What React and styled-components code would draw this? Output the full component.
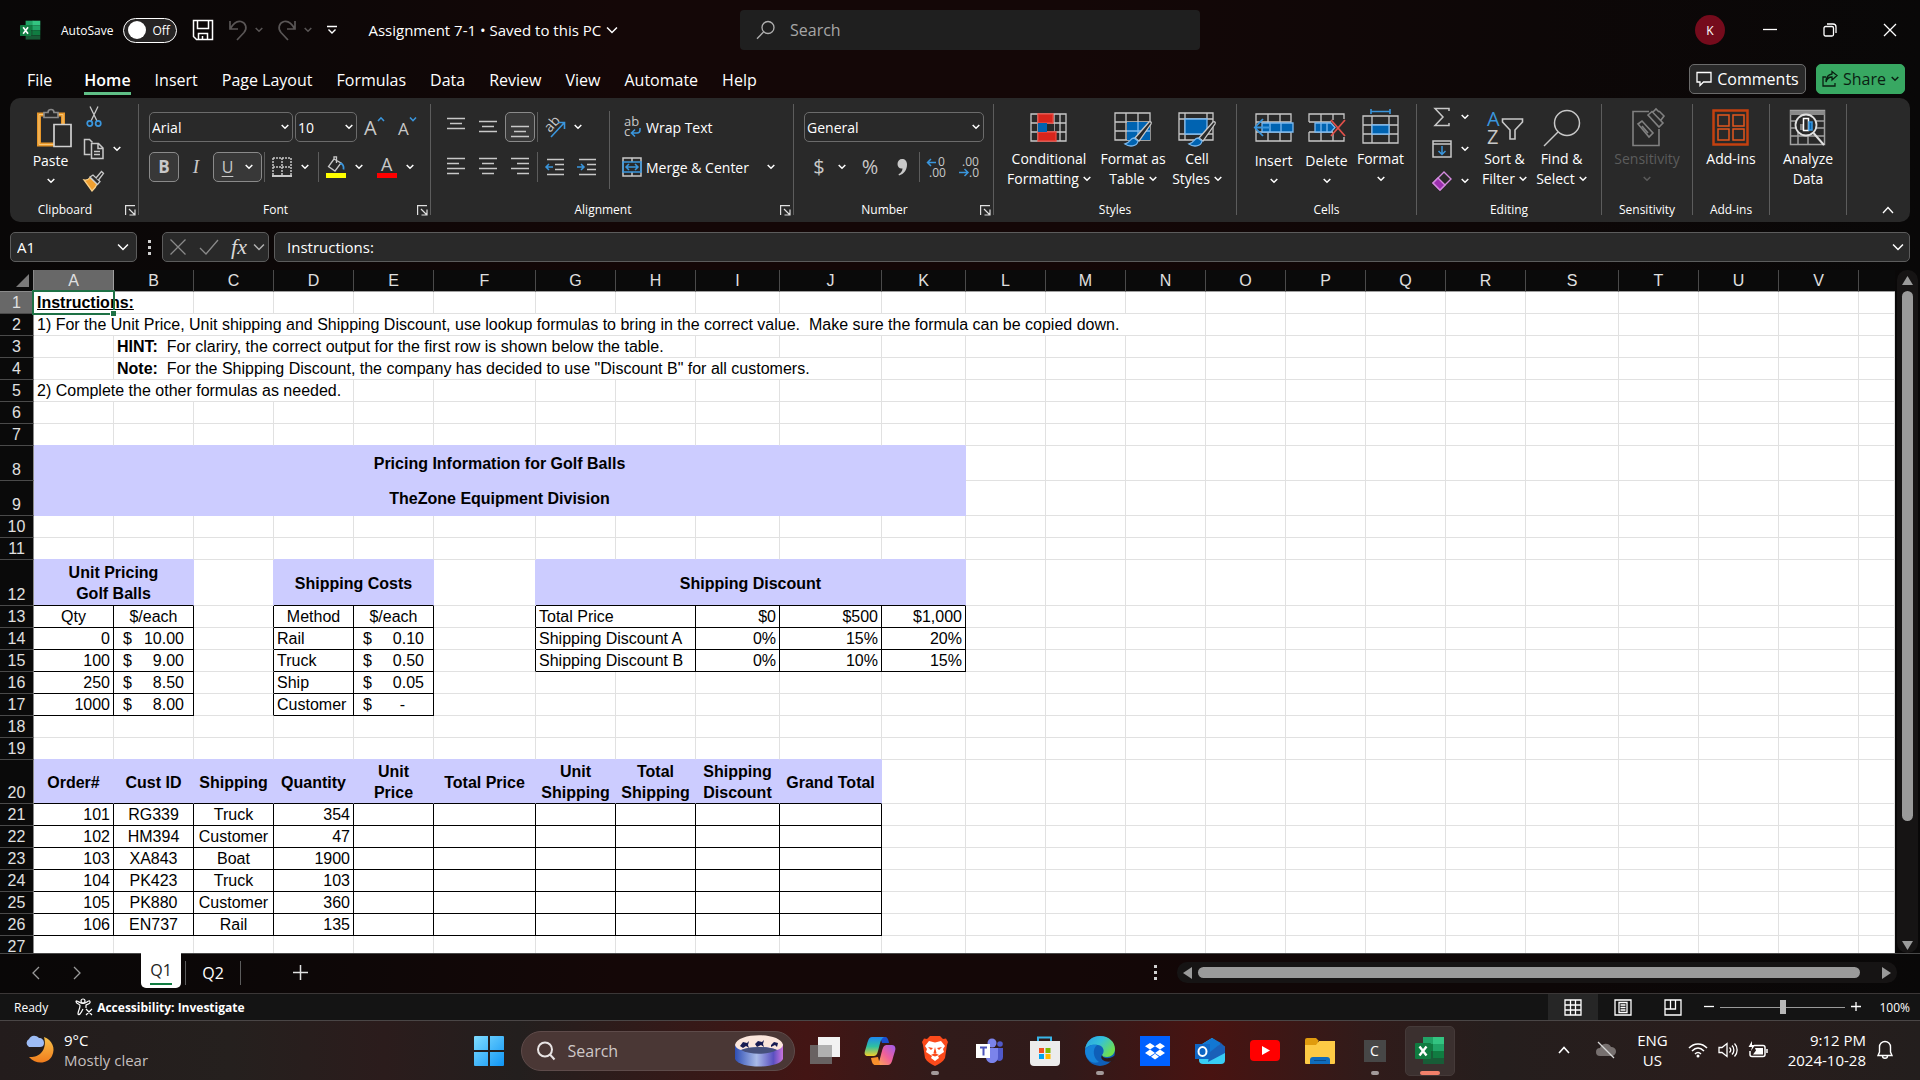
import React from 'react';
import styled, { createGlobalStyle, css } from 'styled-components';

const UI_FONT = '"Open Sans", "Noto Sans", sans-serif';
const CELL_FONT = '"Liberation Sans", Arial, sans-serif';

const LINE = '#c8c8c8';
const BLUE = '#3a96dd';
const FILL_BLUE = '#0063b1';

/* ---------- sheet data ---------- */

const COLUMNS = [
  ['A', 80], ['B', 80], ['C', 80], ['D', 80], ['E', 80], ['F', 102],
  ['G', 80], ['H', 80], ['I', 84], ['J', 102], ['K', 84], ['L', 80],
  ['M', 80], ['N', 80], ['O', 80], ['P', 80], ['Q', 80], ['R', 80],
  ['S', 93], ['T', 80], ['U', 80], ['V', 80], ['', null],
];

const ROW_HEIGHTS = { 8: 35, 9: 35, 12: 46, 20: 44 };
const ROW_COUNT = 27;

// [first row, last row, first column, last column]
const FILLED = [
  [8, 9, 0, 10],
  [12, 12, 0, 1],
  [12, 12, 3, 4],
  [12, 12, 6, 10],
  [20, 20, 0, 9],
];
const BOXED = [
  [13, 17, 0, 1],
  [13, 17, 3, 4],
  [13, 15, 6, 10],
  [21, 26, 0, 9],
];

const money = (value) => ({ money: value });
const right = (text) => ({ text, align: 'right' });
const center = (text) => ({ text, align: 'center' });
const head = (text, span = 1) => ({ text, align: 'center', bold: true, heading: true, span });

const CELLS = {
  '1-0': { text: 'Instructions:', bold: true, underline: true, span: 2, selected: true },
  '2-0': {
    text: '1) For the Unit Price, Unit shipping and Shipping Discount, use lookup formulas to bring in the correct value.  Make sure the formula can be copied down.',
    span: 14,
  },
  '3-1': { lead: 'HINT:', text: '  For clariry, the correct output for the first row is shown below the table.', span: 7 },
  '4-1': { lead: 'Note:', text: '  For the Shipping Discount, the company has decided to use "Discount B" for all customers.', span: 9 },
  '5-0': { text: '2) Complete the other formulas as needed.', span: 4 },
  '8-0': head('Pricing Information for Golf Balls', 11),
  '9-0': head('TheZone Equipment Division', 11),
  '12-0': head('Unit Pricing\nGolf Balls', 2),
  '12-3': head('Shipping Costs', 2),
  '12-6': head('Shipping Discount', 5),
  '13-0': center('Qty'),
  '13-1': center('$/each'),
  '14-0': right('0'),
  '14-1': money('10.00'),
  '15-0': right('100'),
  '15-1': money('9.00'),
  '16-0': right('250'),
  '16-1': money('8.50'),
  '17-0': right('1000'),
  '17-1': money('8.00'),
  '13-3': center('Method'),
  '13-4': center('$/each'),
  '14-3': { text: 'Rail' },
  '14-4': money('0.10'),
  '15-3': { text: 'Truck' },
  '15-4': money('0.50'),
  '16-3': { text: 'Ship' },
  '16-4': money('0.05'),
  '17-3': { text: 'Customer' },
  '17-4': money('-'),
  '13-6': { text: 'Total Price', span: 2 },
  '13-8': right('$0'),
  '13-9': right('$500'),
  '13-10': right('$1,000'),
  '14-6': { text: 'Shipping Discount A', span: 2 },
  '14-8': right('0%'),
  '14-9': right('15%'),
  '14-10': right('20%'),
  '15-6': { text: 'Shipping Discount B', span: 2 },
  '15-8': right('0%'),
  '15-9': right('10%'),
  '15-10': right('15%'),
};

['Order#', 'Cust ID', 'Shipping', 'Quantity', 'Unit\nPrice', 'Total Price', 'Unit\nShipping', 'Total\nShipping', 'Shipping\nDiscount', 'Grand Total'].forEach(
  (text, col) => {
    CELLS[`20-${col}`] = head(text);
  }
);

[
  ['101', 'RG339', 'Truck', '354'],
  ['102', 'HM394', 'Customer', '47'],
  ['103', 'XA843', 'Boat', '1900'],
  ['104', 'PK423', 'Truck', '103'],
  ['105', 'PK880', 'Customer', '360'],
  ['106', 'EN737', 'Rail', '135'],
].forEach(([order, customer, shipping, quantity], i) => {
  CELLS[`${21 + i}-0`] = right(order);
  CELLS[`${21 + i}-1`] = center(customer);
  CELLS[`${21 + i}-2`] = center(shipping);
  CELLS[`${21 + i}-3`] = right(quantity);
});

const inRanges = (ranges, row, col) =>
  ranges.some(([r1, r2, c1, c2]) => row >= r1 && row <= r2 && col >= c1 && col <= c2);

const edgeColor = (row, col, nextRow, nextCol) => {
  if (inRanges(BOXED, row, col) || inRanges(BOXED, nextRow, nextCol)) return '#000';
  if (inRanges(FILLED, row, col) || inRanges(FILLED, nextRow, nextCol)) return '#ccccff';
  return '#e1e1e1';
};

const buildRow = (row) => {
  const cells = [];
  let col = 0;
  while (col < COLUMNS.length) {
    const data = CELLS[`${row}-${col}`] || {};
    const span = data.span || 1;
    const last = col + span - 1;
    cells.push({
      ...data,
      col,
      span,
      filled: inRanges(FILLED, row, col),
      bottom: edgeColor(row, col, row + 1, col),
      edge: edgeColor(row, last, row, last + 1),
    });
    col += span;
  }
  return cells;
};

/* ---------- icons ---------- */

const Ico = ({ w = 20, h = w, vb, children, color = LINE, sw = 1.3 }) => (
  <svg width={w} height={h} viewBox={vb || `0 0 ${w} ${h}`} fill="none" stroke={color} strokeWidth={sw} aria-hidden="true">
    {children}
  </svg>
);

const Chevron = ({ w = 8, color = '#fff', sw = 1.5 }) => (
  <svg width={w} height={w / 2 + 2} viewBox="0 0 8 6" fill="none" stroke={color} strokeWidth={sw} aria-hidden="true">
    <path d="M.7 1 4 4.3 7.3 1" />
  </svg>
);

const Glyph = ({ x, y, size, fill = LINE, children, ...rest }) => (
  <text x={x} y={y} fontSize={size} fill={fill} stroke="none" fontFamily="Open Sans, sans-serif" {...rest}>
    {children}
  </text>
);

const ExcelLogo = ({ size = 20 }) => (
  <Ico w={size} vb="0 0 30 30" sw={0}>
    <path d="M8 1h11v7H8z" fill="#21a366" />
    <path d="M18 1h11v7H18z" fill="#33c481" />
    <path d="M8 8h11v7H8z" fill="#107c41" />
    <path d="M18 8h11v7H18z" fill="#21a366" />
    <path d="M8 15h11v7H8z" fill="#185c37" />
    <path d="M18 15h11v7H18z" fill="#107c41" />
    <path d="M8 22h21v6H8z" fill="#185c37" />
    <rect x="0" y="7" width="16" height="16" rx="1" fill="#107c41" />
    <path d="M4.500 10.500 11.500 19.500M11.500 10.500 4.500 19.500" stroke="#fff" strokeWidth="2.400" />
  </Ico>
);

const SaveIcon = () => (
  <Ico w={22} color="#fff" sw={1.5}>
    <path d="M1.500 1.500h19v19h-16l-3-3zM5.500 1.500v8h11v-8M6.500 20.500v-6h9v6M10.500 20v-3" />
  </Ico>
);
const UndoIcon = () => (
  <Ico w={18} h={22} color="#5a5656" sw={1.7}>
    <path d="M1 2v8h8M1.500 9.500C4.500 4 8 1.500 12 2.500c5 1.300 6.500 7 3 11L8 21" />
  </Ico>
);
const RedoIcon = () => (
  <Ico w={18} h={22} color="#5a5656" sw={1.7}>
    <path d="M17 2v8H9M16.500 9.500C13.500 4 10 1.500 6 2.500c-5 1.300-6.500 7-3 11l7 7.500" />
  </Ico>
);
const MoreIcon = () => (
  <Ico w={10} h={10} color="#fff" sw={1.4}>
    <path d="M0 1.500h10M1.500 4.500 5 8l3.500-3.500" />
  </Ico>
);
const SearchIcon = () => (
  <Ico w={20} color="#b0b0b0" sw={1.3}>
    <circle cx="12" cy="7.500" r="6" />
    <path d="M7.500 12 1 18.700" />
  </Ico>
);
const PasteIcon = () => (
  <Ico w={42} h={40} vb="-6 0 42 40" sw={1.7}>
    <path d="M3 6.500h24v30H3z" stroke="#e8972a" strokeWidth="4" />
    <path d="M3 6.500h24v30H3z" stroke="#f8c878" strokeWidth="1" />
    <path d="M8 9.500v-5h4c0-4 6-4 6 0h4v5z" fill="#292929" stroke="#8a8a8a" />
    <path d="M18 16.500h17v22H18z" fill="#292929" stroke="#d0d0d0" />
  </Ico>
);
const CutIcon = () => (
  <Ico w={16} h={22}>
    <path d="M4 0.500 11 15M12 0.500 5 15" />
    <circle cx="3.800" cy="17.500" r="2.600" stroke={BLUE} strokeWidth="1.700" />
    <circle cx="12.200" cy="17.500" r="2.600" stroke={BLUE} strokeWidth="1.700" />
  </Ico>
);
const CopyIcon = () => (
  <Ico w={22} h={22} sw={1.500}>
    <path d="M7.500 16.500H1.500v-15h5l3 3" />
    <path d="M8.500 5.500h7l4.500 4.500v10.500H8.500zM15 5.500v5h5M11 13.500h6M11 16.500h6" />
  </Ico>
);
const BrushIcon = () => (
  <Ico w={22} h={22}>
    <path d="M1 10c3 .500 5-1 6-2.500l7 6.500c-1 3-3 5-5 7z" fill="#f0a030" stroke="#f8d08a" />
    <path d="m7 7 3-2 7 6.500-2.500 3z" fill="#292929" />
    <path d="M13 8 18.500 1.500l2 1.800L15.500 10" fill="#292929" />
  </Ico>
);
const GrowFont = () => (
  <Ico w={26} h={28}>
    <Glyph x={3} y={22} size={20}>A</Glyph>
    <path d="M17 8 20 4.800 23 8" stroke={BLUE} strokeWidth="1.600" />
  </Ico>
);
const ShrinkFont = () => (
  <Ico w={26} h={28}>
    <Glyph x={5} y={22} size={17}>A</Glyph>
    <path d="M17 4.500 20 7.700 23 4.500" stroke={BLUE} strokeWidth="1.600" />
  </Ico>
);
const BordersIcon = () => (
  <Ico w={20} h={20} sw={1.500}>
    <path d="M1 1h18M1 10h18M1 1v17M10 1v17M19 1v17" strokeDasharray="2 1" />
    <path d="M0 19h20" strokeWidth="2" />
  </Ico>
);
const FillIcon = () => (
  <Ico w={20} h={22}>
    <path d="M8 3 2.500 10.500 9 15l6-8zM8 3V0.800h2.500V7" />
    <path d="M14 7.500c3 0 4 3 3.500 6" stroke={BLUE} strokeWidth="1.800" />
    <path d="M0 17h20v5H0z" fill="#ffff00" stroke="none" />
  </Ico>
);
const FontColorIcon = () => (
  <Ico w={20} h={28}>
    <Glyph x={4} y={18} size={18}>A</Glyph>
    <path d="M0 20h20v5H0z" fill="#ff0000" stroke="none" />
  </Ico>
);
const LinesIcon = ({ rows, short, side = 'center' }) => (
  <Ico w={18} h={22} sw={1.500}>
    {rows.map((y, i) => {
      const cut = short.includes(i) ? 6 : 0;
      const x = side === 'left' ? 0 : side === 'right' ? cut : cut / 2;
      return <path key={y} d={`M${x} ${y}.500h${18 - cut}`} />;
    })}
  </Ico>
);
const OrientIcon = () => (
  <Ico w={26} h={26}>
    <Glyph x={0} y={0} size={14} transform="translate(8 19) rotate(-48)">ab</Glyph>
    <path d="M9 23 22 9M16 8.500h6.500V15" stroke={BLUE} strokeWidth="1.600" />
  </Ico>
);
const IndentIcon = ({ flip }) => (
  <Ico w={20} h={20} sw={1.500}>
    <path d="M2 2.500h17M10 7.500h9M10 12.500h9M2 17.500h17" />
    <path d={flip ? 'M0 10h7M4 7l3 3-3 3' : 'M8 10H1M4 7l-3 3 3 3'} stroke={BLUE} />
  </Ico>
);
const WrapIcon = () => (
  <Ico w={20} h={28}>
    <Glyph x={2} y={13} size={13}>ab</Glyph>
    <Glyph x={2} y={23} size={13}>c</Glyph>
    <path d="M18 15v2c0 2-1 3-3 3h-5M13 16.500 9.500 20l3.500 3.500" stroke={BLUE} strokeWidth="1.600" />
  </Ico>
);
const MergeIcon = () => (
  <Ico w={20} h={20} sw={1.500}>
    <path d="M1 1h18v18H1zM10 1v4M10 15v4" />
    <path d="M1 5h18v10H1zM4 10h12M7 7l-3 3 3 3M13 7l3 3-3 3" stroke={BLUE} />
  </Ico>
);
const DecimalIcon = ({ up }) => (
  <Ico w={24} h={28}>
    <Glyph x={up ? 13 : 5} y={13} size={12}>{up ? '0' : '.00'}</Glyph>
    <Glyph x={up ? 4 : 12} y={24} size={12}>{up ? '.00' : '.0'}</Glyph>
    <path d={up ? 'M11 9.500H3M6 6 2.500 9.500 6 13' : 'M2 19.500h9M7.500 16l3.500 3.500L7.500 23'} stroke={BLUE} strokeWidth="1.500" />
  </Ico>
);
const CommaIcon = () => (
  <Ico w={10} h={18} sw={0}>
    <path d="M5 1c3 0 5 2 5 5.500C10 12 7 16 2 17.500l-.500-1.200C4 15 5.500 13 5.500 10.500 2.500 11 .500 9 .500 6 .500 3 2.500 1 5 1z" fill={LINE} />
  </Ico>
);
const ConditionalIcon = () => (
  <Ico w={38} h={30} sw={1.300}>
    <path d="M1 1h35v27H1zM1 10h35M1 19h35M8 1v27M24 1v27M30 1v27" />
    <path d="M8 1h15v9H8zM8 19h18v9H8z" fill="#d8251c" stroke="#e8483f" />
    <path d="M8 10h9v9H8z" fill={FILL_BLUE} stroke="none" />
    <path d="M18 11h6v7h-6z" fill="#292929" stroke="none" />
  </Ico>
);
const Brush = () => (
  <g>
    <path d="M36 10 22 26l4 3 12-17c1-2-1-3-2-2z" fill="#292929" stroke={LINE} />
    <path d="M21 26c-4 0-4 5-9 6 4 3 12 3 13-3z" fill={FILL_BLUE} stroke="#7ab8ee" />
  </g>
);
const TableIcon = () => (
  <Ico w={40} h={34} vb="0 -1 40 34">
    <path d="M2 1h35v27H2zM2 10h35M2 19h35M13 1v27M25 1v27" />
    <path d="M14 10h23v18H14z" fill={FILL_BLUE} stroke="none" />
    <path d="M14 19h23M25 10v18" stroke="#7ab8ee" />
    <Brush />
  </Ico>
);
const CellStyleIcon = () => (
  <Ico w={40} h={34} vb="0 -1 40 34">
    <path d="M2 1h34v27H2zM2 7h34M2 22h34M8 1v27M30 1v6" />
    <path d="M8 7h22v15H8z" fill={FILL_BLUE} stroke="#7ab8ee" />
    <Brush />
  </Ico>
);
const InsertIcon = () => (
  <Ico w={40} h={32}>
    <path d="M2 2h35v27H2zM14 2v27M26 2v27M2 10h35M2 20h35" />
    <path d="M8 11h31v9H8z" fill={FILL_BLUE} stroke="#7ab8ee" />
    <path d="M16 11v9M27 11v9" stroke="#7ab8ee" />
    <path d="M16 15.500H1M9 7 .800 15.500 9 24" stroke={BLUE} strokeWidth="1.800" />
  </Ico>
);
const DeleteIcon = () => (
  <Ico w={40} h={32}>
    <path d="M2 10V2h35v5M2 10h22M14 2v8M26 2v6M2 20h24M2 20v9h35v-4M14 20v9M26 20v9" />
    <path d="M8 11h16l4 4.500L24 20H8z" fill={FILL_BLUE} stroke="#7ab8ee" />
    <path d="M14 11v9M20 11v9" stroke="#7ab8ee" />
    <path d="M24 8l14 16M38 8 24 24" stroke="#e0504a" strokeWidth="1.800" />
  </Ico>
);
const FormatIcon = () => (
  <Ico w={38} h={38}>
    <path d="M1 7h35v27H1zM1 16h35M1 25h35M10 7v27M27 7v27" />
    <path d="M10 16h17v9H10z" fill={FILL_BLUE} stroke="#7ab8ee" />
    <path d="M9 2.500h19M9 0v5M28 0v5" stroke={BLUE} strokeWidth="1.600" />
  </Ico>
);
const SigmaIcon = () => (
  <Ico w={18} h={20} sw={1.500}>
    <path d="M16 4V1.500H2L10 10l-8 8.500h14V16" />
  </Ico>
);
const FillDownIcon = () => (
  <Ico w={20} h={18} sw={1.500}>
    <path d="M1 1h18v16H1zM1 4h18" />
    <path d="M10 6v8M6.500 11l3.500 3.500 3.500-3.500" stroke={BLUE} />
  </Ico>
);
const EraserIcon = () => (
  <Ico w={20} h={20} color="#d58be0" sw={1.400}>
    <path d="M1 12 12 1l7 7L8 19z" />
    <path d="M1 12l5-5 7 7-5 5z" fill="#9b2fae" />
  </Ico>
);
const SortIcon = () => (
  <Ico w={38} h={40} sw={1.600}>
    <Glyph x={1} y={18} size={20} fill={BLUE}>A</Glyph>
    <Glyph x={1} y={36} size={20}>Z</Glyph>
    <path d="M16.500 11h20v3l-7.500 8v9h-5v-9l-7.500-8z" />
  </Ico>
);
const FindIcon = () => (
  <Ico w={38} h={38} sw={1.500}>
    <circle cx="24" cy="14" r="12.500" />
    <path d="M15 23 1 37" />
  </Ico>
);
const SensitivityIcon = () => (
  <Ico w={38} h={40} color="#808080" sw={1.600}>
    <path d="M21 3.500H5v34h26V21" />
    <path d="m10 16 4-3 11 12-4 4zM14 18l6 7M20 7l4-3.500L35 15l-4 4zM25 4l3-3 3 3M31 3l5 5-3 4" />
  </Ico>
);
const AddinsIcon = () => (
  <Ico w={38} h={38} color="#e2571e" sw={1.500}>
    <path d="M1.500 1.500h34v34h-34z" strokeWidth="2.500" stroke="#c4400f" />
    <path d="M6 6h11v11H6zM21 6h11v11H21zM6 20h11v11H6zM21 20h11v11H21z" />
  </Ico>
);
const AnalyzeIcon = () => (
  <Ico w={38} h={38} sw={1.500}>
    <path d="M1.500 1.500h34v34h-34zM1.500 12h34M1.500 19h34M1.500 27h34M9 19v17M19 27v9" stroke="#a0a0a0" />
    <path d="M1 4h35" strokeWidth="4" stroke="#8a8a8a" />
    <circle cx="17" cy="16" r="10.500" fill="#292929" stroke="#e0e0e0" strokeWidth="1.800" />
    <path d="M24.500 24 35 36" stroke="#e0e0e0" strokeWidth="2" />
    <path d="M11 15h4v6h-4z" fill="#808080" stroke="none" />
    <path d="M14.500 9.500h5v12h-5z" stroke="#fff" />
    <path d="M20 13h3v8h-3z" fill={FILL_BLUE} stroke={BLUE} />
  </Ico>
);
const LauncherIcon = () => (
  <Ico w={11} h={11} color="#e0e0e0" sw={1.200}>
    <path d="M.600 10V.600H10M4 4l5.500 5.500M10 4.500v5.500H4.500" />
  </Ico>
);

/* ---------- taskbar icons ---------- */

const WeatherIcon = () => (
  <Ico w={32} h={32} sw={0}>
    <defs>
      <linearGradient id="moon" x1="0" y1="0" x2="0" y2="1">
        <stop offset="0" stopColor="#f8c24a" />
        <stop offset="1" stopColor="#f07c1c" />
      </linearGradient>
    </defs>
    <path d="M20 3c8 3 12 11 8 19-4 8-16 9-23 1 8 1 19-5 15-20z" fill="url(#moon)" />
    <path d="M5 13a4.500 4.500 0 0 1 0-8 6 6 0 0 1 10-1c3 0 5 2 5 5s-2 4-4 4z" fill="#9dbcf5" />
  </Ico>
);
const WindowsIcon = () => (
  <Ico w={30} sw={0}>
    <defs>
      <linearGradient id="win" x1="0" y1="0" x2="1" y2="1">
        <stop offset="0" stopColor="#7fdcff" />
        <stop offset="1" stopColor="#0f95f5" />
      </linearGradient>
    </defs>
    <path d="M0 1q0-1 1-1h13v14H0zM16 0h13q1 0 1 1v13H16zM0 16h14v14H1q-1 0-1-1zM16 16h14v13q0 1-1 1H16z" fill="url(#win)" />
  </Ico>
);
const DrumIcon = () => (
  <Ico w={48} h={32} sw={0}>
    <defs>
      <linearGradient id="drum" x1="0" y1="0" x2="1" y2="0">
        <stop offset="0" stopColor="#2f4fb4" />
        <stop offset=".45" stopColor="#a9bbe8" />
        <stop offset=".8" stopColor="#5a50c0" />
        <stop offset="1" stopColor="#c873dd" />
      </linearGradient>
    </defs>
    <path d="M0 9v15c4 10 44 10 48 0V9z" fill="url(#drum)" />
    <path d="M0 10C2-3 46-3 48 10c-1 3-3 4-6 5-9-4-27-4-36 0-3-1-5-2-6-5z" fill="#fbe6dc" />
    <path d="M6 15c9-4 27-4 36 0-9 5-27 5-36 0z" fill="#46507c" />
    <path d="M14 3V0M24 2v3M36 3V1M7 17v6M15 18v6M31 18v5M40 17v6" stroke="#5b4a5c" />
    <path d="M5 11l3-4 4 1 2-2-1 4 1 3-3-2-3 2zM20 9l3-3 4 1 2-2-1 4 1 3-3-2-4 2zM36 10l3-3 4 1-1 4-2-2-4 2z" fill="#171b52" />
  </Ico>
);
const TaskViewIcon = () => (
  <Ico w={30} h={28} sw={0}>
    <path d="M8 0h22v20H8z" fill="#f2f2f2" />
    <path d="M0 8h22v19H0z" fill="#707070" opacity=".85" />
    <path d="M8 8h14v12H8z" fill="#b0b0b0" />
  </Ico>
);
const CopilotIcon = () => (
  <Ico w={32} h={30} sw={0}>
    <defs>
      <linearGradient id="cpA" x1="0" y1="0" x2="0" y2="1">
        <stop offset="0" stopColor="#1e88f0" />
        <stop offset=".5" stopColor="#2fc0a0" />
        <stop offset="1" stopColor="#f3cf2a" />
      </linearGradient>
      <linearGradient id="cpB" x1="1" y1="0" x2="0" y2="1">
        <stop offset="0" stopColor="#9b5cf0" />
        <stop offset=".5" stopColor="#f0609a" />
        <stop offset="1" stopColor="#ffb04a" />
      </linearGradient>
    </defs>
    <path d="M16 1h5c2 0 3 1 4 6h-7z" fill="#1a4fd0" />
    <path d="M8 1h12c-4 2-4 8-6 14-1 4-2 5-5 5H4c-3 0-4-2-3-5C4 6 4 1 8 1z" fill="url(#cpA)" />
    <path d="M24 29H12c4-2 4-8 6-14 1-4 2-6 5-6h5c3 0 4 3 3 6-3 9-3 14-7 14z" fill="url(#cpB)" />
    <path d="M16 29h-5c-2 0-3-2-4-7l7-1z" fill="#f8902c" />
  </Ico>
);
const BraveIcon = () => (
  <Ico w={26} h={30} sw={0}>
    <path d="M8 0h10l3 3 3-.500L26 6l-1 3-2 13c-2 4-6 6-10 8-4-2-8-4-10-8L1 9 0 6l2-3.500L5 3z" fill="#fb4a1b" />
    <path d="M7 5l6 1.500L19 5l4 5-2 3 1 3-6 4 1 2-4 3-4-3 1-2-6-4 1-3-2-3z" fill="#fff" />
    <path d="M6 11l5 1-2 2zM20 11l-5 1 2 2zM13 11l1.500 6H11.500zM9 19l4-2 4 2-4 1.500z" fill="#fb4a1b" />
  </Ico>
);
const TeamsIcon = () => (
  <Ico w={28} h={26} sw={0}>
    <circle cx="16" cy="5" r="4.500" fill="#7b83eb" />
    <circle cx="24" cy="6" r="2.800" fill="#5059c9" />
    <path d="M20 10h7v9c0 4-4 5-6 3z" fill="#5059c9" />
    <path d="M10 10h12v9c0 8-12 8-12 0z" fill="#7b83eb" />
    <path d="M0 6h14v14H0z" fill="#fff" />
    <path d="M4 9.500h7M7.500 9.500v8" stroke="#4b53bc" strokeWidth="2" />
  </Ico>
);
const StoreIcon = () => (
  <Ico w={30} sw={0}>
    <path d="M8 7V1.500h13V7" stroke="#39b5e8" strokeWidth="2" fill="none" />
    <path d="M0 5h30v21q0 4-4 4H4q-4 0-4-4z" fill="#ececec" />
    <path d="M9 12h5v5H9z" fill="#f25022" />
    <path d="M15.500 12h5v5h-5z" fill="#7fba00" />
    <path d="M9 18h5v5H9z" fill="#00a4ef" />
    <path d="M15.500 18h5v5h-5z" fill="#ffb900" />
  </Ico>
);
const EdgeIcon = () => (
  <Ico w={30} sw={0}>
    <defs>
      <linearGradient id="edge" x1="0" y1="0" x2="1" y2=".6">
        <stop offset="0" stopColor="#2b9fe6" />
        <stop offset=".5" stopColor="#35c1d8" />
        <stop offset="1" stopColor="#6fe04c" />
      </linearGradient>
    </defs>
    <circle cx="15" cy="15" r="15" fill="#0f5fb8" />
    <path d="M0 14C1 5 7 0 15 0c9 0 15 6 15 13 0 5-4 8-8 8-3 0-5-1-5-2 3-3 2-9-4-10C7 8 1 10 0 14z" fill="url(#edge)" />
    <path d="M0 14c2-4 7-6 12-5-5 4-4 13 2 17-8 3-14-4-14-12z" fill="#1683d8" />
    <path d="M17 19c0 3 6 5 12 1l1 2-2 3c-7 2-14-1-11-6z" fill="#2f1a1a" />
  </Ico>
);
const DropboxIcon = () => (
  <Ico w={30} sw={0}>
    <path d="M0 0h30v30H0z" fill="#0061ff" />
    <path d="M10 7l5 3.300-5 3.300-5-3.300zM20 7l5 3.300-5 3.300-5-3.300zM10 13.600l5 3.300-5 3.300-5-3.300zM20 13.600l5 3.300-5 3.300-5-3.300zM15 17.800l4 3-4 2.700-4-2.700z" fill="#fff" />
  </Ico>
);
const OutlookIcon = () => (
  <Ico w={30} h={28} sw={0}>
    <path d="M4 9 17 1l13 9v13q0 4-4 4H8q-4 0-4-4z" fill="#38cdf5" />
    <path d="M4 9 17 1l9 5-13 12H4z" fill="#1277d3" />
    <path d="M15 15 26 6l4 4v6L13 25z" fill="#1a5fb8" />
    <path d="M0 7h15v15H0z" fill="#0f66c4" />
    <ellipse cx="7.500" cy="14.500" rx="4" ry="4.500" stroke="#fff" strokeWidth="2" />
  </Ico>
);
const YoutubeIcon = () => (
  <Ico w={30} h={22} sw={0}>
    <rect width="30" height="21" rx="4" fill="#ff0000" />
    <path d="M12 6l8 4.500-8 4.500z" fill="#fff" />
  </Ico>
);
const FolderIcon = () => (
  <Ico w={30} h={28} sw={0}>
    <path d="M0 3q0-2 2-2h9l3 3h-1v6H0z" fill="#e09b0e" />
    <path d="M0 8h11l3-4h16v22q0 1-1 1H1q-1 0-1-1z" fill="#fdca45" />
    <path d="M5 27v-4q0-3 3-3h14q3 0 3 3v4z" fill="#0f6cbd" />
    <path d="M9 23.500h12" stroke="#0a4a86" strokeWidth="1" />
  </Ico>
);
const ConsoleIcon = () => (
  <Ico w={22} h={22} sw={0}>
    <path d="M0 0h22v22H0z" fill="#474747" />
    <Glyph x={6} y={16} size={14} fill="#fff">C</Glyph>
  </Ico>
);
const WifiIcon = () => (
  <Ico w={20} h={16} color="#fff" sw={1.500}>
    <path d="M1 6C6 .500 14 .500 19 6M4 9c4-4 8-4 12 0M7 12c2-2 4-2 6 0" />
    <circle cx="10" cy="14" r="1.500" fill="#fff" stroke="none" />
  </Ico>
);
const VolumeIcon = () => (
  <Ico w={20} h={16} color="#fff" sw={1.300}>
    <path d="M1 5.500h3L9 1.500v13L4 10.500H1zM11.500 5.500c1.500 1.500 1.500 3.500 0 5M14 3.500c2.500 2.500 2.500 6.500 0 9M16.500 1.500c3.500 3.500 3.500 9.500 0 13" />
  </Ico>
);
const BatteryIcon = () => (
  <Ico w={20} h={18} color="#fff" sw={1.500}>
    <path d="M6 4.500h9q2 0 2 2v7q0 2-2 2H4q-2 0-2-2V10M19 8v4" />
    <path d="M7 7h8v6.500H5l3-4z" fill="#fff" stroke="none" />
    <path d="M4 0 .500 6H4l-1 4 4-6H4z" fill="#fff" stroke="none" />
  </Ico>
);
const CloudOffIcon = () => (
  <Ico w={22} h={18} sw={1.300}>
    <path d="M5 15a4 4 0 0 1 0-8 6 6 0 0 1 11-1 4.500 4.500 0 0 1 1 9z" fill="#77706f" stroke="none" />
    <path d="M3 1l16 16" stroke="#d8d8d8" />
  </Ico>
);
const BellIcon = () => (
  <Ico w={18} h={20} color="#fff" sw={1.400}>
    <path d="M2 15.500h14L14.500 12V7a5.500 5.500 0 0 0-11 0v5zM6.500 16c0 3 5 3 5 0" />
  </Ico>
);

/* ---------- components ---------- */

const Toolbar = () => (
  <TitleBar>
    <QuickAccess>
      <ExcelLogo size={21} />
      <SwitchLabel>
        AutoSave
        <Switch>
          <input type="checkbox" role="switch" aria-label="AutoSave" />
          <i />
          <span>Off</span>
        </Switch>
      </SwitchLabel>
      <BarButton aria-label="Save"><SaveIcon /></BarButton>
      <BarButton aria-label="Undo"><UndoIcon /><Chevron color="#5a5656" /></BarButton>
      <BarButton aria-label="Redo"><RedoIcon /><Chevron color="#5a5656" /></BarButton>
      <BarButton aria-label="Customize"><MoreIcon /></BarButton>
      <FileName>Assignment 7-1 • Saved to this PC <Chevron w={14} sw={1} /></FileName>
    </QuickAccess>
    <SearchBox>
      <SearchIcon />
      <input type="text" placeholder="Search" aria-label="Search" />
    </SearchBox>
    <WindowControls>
      <Account>K</Account>
      <WindowButton aria-label="Minimize">
        <Ico w={14} h={14} color="#fff"><path d="M0 6.500h14" /></Ico>
      </WindowButton>
      <WindowButton aria-label="Restore">
        <Ico w={14} h={14} color="#fff"><rect x="1" y="3.500" width="9.500" height="9.500" rx="1.500" /><path d="M4 1h6q3 0 3 3v6" /></Ico>
      </WindowButton>
      <WindowButton aria-label="Close">
        <Ico w={14} h={14} color="#fff"><path d="M1 1l12 12M13 1 1 13" /></Ico>
      </WindowButton>
    </WindowControls>
  </TitleBar>
);

const TABS = ['File', 'Home', 'Insert', 'Page Layout', 'Formulas', 'Data', 'Review', 'View', 'Automate', 'Help'];

const Menu = () => (
  <MenuBar>
    <Tabs>
      {TABS.map((tab) => (
        <Tab key={tab} $active={tab === 'Home'}>{tab}</Tab>
      ))}
    </Tabs>
    <CommentsButton>
      <Ico w={16} h={16} color="#fff"><path d="M1 1.500h14v9.500H7.500L4 14.500V11H1z" /></Ico>
      Comments
    </CommentsButton>
    <ShareButton>
      <Ico w={16} h={16} color="#0a1f12"><path d="M4 6H1v9h12v-3M4 11c1-4 4-5 6-5v3l5-4.500L10 .500v2.500C7 3.500 4 6 4 11z" /></Ico>
      Share
      <Chevron color="#0a1f12" />
    </ShareButton>
  </MenuBar>
);

const Group = ({ width, label, launcher, children }) => (
  <>
    <GroupBox $width={width}>
      <GroupBody>{children}</GroupBody>
      <GroupFooter>
        <span>{label}</span>
        {launcher && <Launcher aria-label={`${label} settings`}><LauncherIcon /></Launcher>}
      </GroupFooter>
    </GroupBox>
    <GroupLine />
  </>
);

const Big = ({ icon, lines, width, disabled, split, dropdown = true }) => (
  <BigButton $width={width} disabled={disabled}>
    <BigIcon $split={split}>{icon}</BigIcon>
    {lines.map((line, i) => (
      <BigLine key={line}>
        {line}
        {dropdown && i === 1 && <Chevron />}
      </BigLine>
    ))}
    {dropdown && lines.length === 1 && <BigLine><Chevron color={disabled ? '#5c5c5c' : '#fff'} /></BigLine>}
  </BigButton>
);

const Combo = ({ width, label, value }) => (
  <ComboBox $width={width}>
    <select aria-label={label} defaultValue={value}>
      <option>{value}</option>
    </select>
    <Chevron />
  </ComboBox>
);

const Drop = () => <DropButton aria-label="More options"><Chevron /></DropButton>;

const Ribbon = () => (
  <RibbonBar>
    <Group width={128} label="Clipboard" launcher>
      <Spacer $w={12} />
      <Big width={57} icon={<PasteIcon />} lines={['Paste']} split />
      <SmallColumn>
        <SmallRow><Tool aria-label="Cut"><CutIcon /></Tool></SmallRow>
        <SmallRow><Tool aria-label="Copy"><CopyIcon /></Tool><Drop /></SmallRow>
        <SmallRow><Tool aria-label="Format Painter"><BrushIcon /></Tool></SmallRow>
      </SmallColumn>
    </Group>

    <Group width={291} label="Font" launcher>
      <Spacer $w={10} />
      <ToolRows>
        <ToolRow>
          <Combo width={144} label="Font" value="Arial" />
          <Combo width={62} label="Font size" value="10" />
          <Tool aria-label="Increase font size"><GrowFont /></Tool>
          <Tool aria-label="Decrease font size"><ShrinkFont /></Tool>
        </ToolRow>
        <ToolRow>
          <Tool $on><BoldMark>B</BoldMark></Tool>
          <Tool><ItalicMark>I</ItalicMark></Tool>
          <Tool $on $wide><UnderMark>U</UnderMark><Chevron /></Tool>
          <ToolLine />
          <Tool aria-label="Borders"><BordersIcon /></Tool>
          <Drop />
          <ToolLine />
          <Tool aria-label="Fill color"><FillIcon /></Tool>
          <Drop />
          <Tool aria-label="Font color"><FontColorIcon /></Tool>
          <Drop />
        </ToolRow>
      </ToolRows>
    </Group>

    <Group width={362} label="Alignment" launcher>
      <Spacer $w={10} />
      <ToolRows $width={168}>
        <ToolRow>
          <Tool aria-label="Top align"><LinesIcon rows={[2, 7, 12]} short={[1]} /></Tool>
          <Tool aria-label="Middle align"><LinesIcon rows={[5, 10, 15]} short={[1]} /></Tool>
          <Tool $on aria-label="Bottom align"><LinesIcon rows={[10, 15, 20]} short={[1]} /></Tool>
          <ToolLine />
          <Tool aria-label="Orientation"><OrientIcon /></Tool>
          <Drop />
        </ToolRow>
        <ToolRow>
          <Tool aria-label="Align left"><LinesIcon rows={[2, 7, 12, 17]} short={[1, 3]} side="left" /></Tool>
          <Tool aria-label="Center"><LinesIcon rows={[2, 7, 12, 17]} short={[1, 3]} /></Tool>
          <Tool aria-label="Align right"><LinesIcon rows={[2, 7, 12, 17]} short={[1, 3]} side="right" /></Tool>
          <ToolLine />
          <Tool aria-label="Decrease indent"><IndentIcon /></Tool>
          <Tool aria-label="Increase indent"><IndentIcon flip /></Tool>
        </ToolRow>
      </ToolRows>
      <TallLine />
      <ToolRows>
        <ToolRow><TextTool><WrapIcon />Wrap Text</TextTool></ToolRow>
        <ToolRow><TextTool><MergeIcon />Merge &amp; Center</TextTool><Drop /></ToolRow>
      </ToolRows>
    </Group>

    <Group width={199} label="Number" launcher>
      <Spacer $w={10} />
      <ToolRows>
        <ToolRow><Combo width={180} label="Number format" value="General" /></ToolRow>
        <ToolRow>
          <Tool>$</Tool>
          <Drop />
          <Tool>%</Tool>
          <Tool aria-label="Comma style"><CommaIcon /></Tool>
          <ToolLine />
          <Tool aria-label="Increase decimal"><DecimalIcon up /></Tool>
          <Tool aria-label="Decrease decimal"><DecimalIcon /></Tool>
        </ToolRow>
      </ToolRows>
    </Group>

    <Group width={242} label="Styles">
      <Spacer $w={8} />
      <Big width={94} icon={<ConditionalIcon />} lines={['Conditional', 'Formatting']} />
      <Big width={74} icon={<TableIcon />} lines={['Format as', 'Table']} />
      <Big width={54} icon={<CellStyleIcon />} lines={['Cell', 'Styles']} />
    </Group>

    <Group width={179} label="Cells">
      <Spacer $w={10} />
      <Big width={53} icon={<InsertIcon />} lines={['Insert']} split />
      <Big width={53} icon={<DeleteIcon />} lines={['Delete']} split />
      <Big width={55} icon={<FormatIcon />} lines={['Format']} />
    </Group>

    <Group width={184} label="Editing">
      <Spacer $w={10} />
      <SmallColumn>
        <SmallRow><Tool aria-label="AutoSum"><SigmaIcon /></Tool><Drop /></SmallRow>
        <SmallRow><Tool aria-label="Fill"><FillDownIcon /></Tool><Drop /></SmallRow>
        <SmallRow><Tool aria-label="Clear"><EraserIcon /></Tool><Drop /></SmallRow>
      </SmallColumn>
      <Big width={57} icon={<SortIcon />} lines={['Sort &', 'Filter']} />
      <Big width={57} icon={<FindIcon />} lines={['Find &', 'Select']} />
    </Group>

    <Group width={90} label="Sensitivity">
      <Big width={90} icon={<SensitivityIcon />} lines={['Sensitivity']} disabled />
    </Group>
    <Group width={76} label="Add-ins">
      <Big width={76} icon={<AddinsIcon />} lines={['Add-ins']} dropdown={false} />
    </Group>
    <Group width={76} label="">
      <Big width={76} icon={<AnalyzeIcon />} lines={['Analyze', 'Data']} dropdown={false} />
    </Group>
    <Collapse aria-label="Collapse ribbon">
      <Ico w={12} h={8} color="#fff"><path d="M1 7 6 1.500 11 7" /></Ico>
    </Collapse>
  </RibbonBar>
);

const FormulaBar = () => (
  <FormulaRow>
    <NameBox>
      <input type="text" defaultValue="A1" aria-label="Name box" />
      <Chevron w={14} sw={1} />
    </NameBox>
    <Dots />
    <FxBox>
      <button aria-label="Cancel"><Ico w={18} color="#8a8a8a"><path d="M1.500 1.500l15 15M16.500 1.500l-15 15" /></Ico></button>
      <button aria-label="Enter"><Ico w={20} h={18} color="#8a8a8a"><path d="M1 10l6 6L19 2" /></Ico></button>
      <button><FxMark>fx</FxMark><Chevron w={14} sw={1} color="#b0b0b0" /></button>
    </FxBox>
    <FormulaInput>
      <input type="text" defaultValue="Instructions:" aria-label="Formula" />
      <Chevron w={14} sw={1} />
    </FormulaInput>
  </FormulaRow>
);

const CellContent = ({ cell }) => {
  if (cell.money) {
    return (
      <Money $dash={cell.money === '-'}>
        <span>$</span>
        <span>{cell.money}</span>
      </Money>
    );
  }
  return (
    <>
      {cell.lead && <b>{cell.lead}</b>}
      {cell.text}
      {cell.selected && <Selection />}
    </>
  );
};

const Sheet = () => (
  <SheetArea>
    <SheetView>
      <Grid>
        <colgroup>
          <Col $width={34} />
          {COLUMNS.map(([name, width]) => (
            <Col key={name} $width={width} />
          ))}
        </colgroup>
        <thead>
          <tr>
            <Corner>
              <Ico w={14} h={14} sw={0}><path d="M13 0v13H0z" fill="#7a7a7a" /></Ico>
            </Corner>
            {COLUMNS.map(([name]) => (
              <ColHead key={name} $on={name === 'A'}>{name}</ColHead>
            ))}
          </tr>
        </thead>
        <tbody>
          {Array.from({ length: ROW_COUNT }, (_, i) => i + 1).map((row) => (
            <tr key={row}>
              <RowHead $height={ROW_HEIGHTS[row]} $on={row === 1}>{row}</RowHead>
              {buildRow(row).map((cell) => (
                <Cell
                  key={cell.col}
                  colSpan={cell.span}
                  $align={cell.align}
                  $bold={cell.bold}
                  $heading={cell.heading}
                  $underline={cell.underline}
                  $filled={cell.filled}
                  $bottom={cell.bottom}
                  $edge={cell.edge}
                >
                  <CellContent cell={cell} />
                </Cell>
              ))}
            </tr>
          ))}
        </tbody>
      </Grid>
    </SheetView>
    <VScroll>
      <Ico w={11} h={11} sw={0}><path d="M5.500 1 11 10H0z" fill="#9a9a9a" /></Ico>
      <VThumb />
      <Ico w={11} h={11} sw={0}><path d="M5.500 10 11 1H0z" fill="#9a9a9a" /></Ico>
    </VScroll>
  </SheetArea>
);

const SheetTabs = () => (
  <SheetTabBar>
    <NavButton aria-label="Previous sheet"><Ico w={8} h={14} color="#9a9a9a"><path d="M7 1 1 7l6 6" /></Ico></NavButton>
    <NavButton aria-label="Next sheet"><Ico w={8} h={14} color="#9a9a9a"><path d="M1 1l6 6-6 6" /></Ico></NavButton>
    <ActiveSheet><span>Q1</span></ActiveSheet>
    <OtherSheet>Q2</OtherSheet>
    <AddSheet aria-label="New sheet"><Ico w={15} color="#e0e0e0" sw={1.500}><path d="M7.500 0v15M0 7.500h15" /></Ico></AddSheet>
    <Dots />
    <HScroll>
      <Ico w={9} h={12} sw={0}><path d="M9 0v12L0 6z" fill="#9a9a9a" /></Ico>
      <HThumb />
      <Ico w={9} h={12} sw={0}><path d="M0 0v12l9-6z" fill="#9a9a9a" /></Ico>
    </HScroll>
  </SheetTabBar>
);

const Status = () => (
  <StatusBar>
    <span>Ready</span>
    <AccessButton>
      <Ico w={18} h={18} color="#fff" sw={1.200}>
        <circle cx="8" cy="3" r="2" />
        <path d="M1 3.500c0-2 4 2 7 2s6-4 7-2-3 3-4 3.500v3M1 3.500C1 6 5 6 5 7.500 5 11 3 13 3 16c1 2 3-1 5-5M11 11l6 6M17 11l-6 6" />
      </Ico>
      Accessibility: Investigate
    </AccessButton>
    <ViewButton $on aria-label="Normal view"><Ico w={18} h={17} color="#fff"><path d="M1 1h16v15H1zM6.500 1v15M11.500 1v15M1 6h16M1 11h16" /></Ico></ViewButton>
    <ViewButton aria-label="Page layout view"><Ico w={18} h={17} color="#fff"><path d="M1 1h16v15H1zM5 3.500h8v10H5zM6.500 6h5M6.500 8.500h5M6.500 11h5" /></Ico></ViewButton>
    <ViewButton aria-label="Page break view"><Ico w={18} h={17} color="#fff"><path d="M1 1h16v15H1zM6.500 1v9M1 10h10.500V1" /></Ico></ViewButton>
    <ZoomButton aria-label="Zoom out"><Ico w={10} color="#fff"><path d="M0 4.500h10" /></Ico></ZoomButton>
    <ZoomSlider type="range" min="10" max="190" defaultValue="100" aria-label="Zoom" />
    <ZoomButton aria-label="Zoom in"><Ico w={10} color="#fff"><path d="M0 4.500h10M5 0v9" /></Ico></ZoomButton>
    <span>100%</span>
  </StatusBar>
);

const APPS = [
  ['Task view', <TaskViewIcon />],
  ['Copilot', <CopilotIcon />],
  ['Brave', <BraveIcon />, true],
  ['Teams', <TeamsIcon />],
  ['Store', <StoreIcon />],
  ['Edge', <EdgeIcon />, true],
  ['Dropbox', <DropboxIcon />],
  ['Outlook', <OutlookIcon />],
  ['YouTube', <YoutubeIcon />],
  ['File Explorer', <FolderIcon />],
  ['Console', <ConsoleIcon />, true],
];

const Taskbar = () => (
  <TaskbarRow>
    <Weather>
      <WeatherIcon />
      <span>
        9°C
        <small>Mostly clear</small>
      </span>
    </Weather>
    <Dock>
      <DockApp aria-label="Start"><WindowsIcon /></DockApp>
      <DockSearch>
        <Ico w={20} color="#e8e4e4" sw={2}>
          <circle cx="9" cy="8.500" r="7" />
          <path d="M14 13.500l4.500 5" />
        </Ico>
        <input type="text" placeholder="Search" aria-label="Search the desktop" />
        <DrumIcon />
      </DockSearch>
      {APPS.map(([name, icon, running]) => (
        <DockApp key={name} aria-label={name} $running={running}>{icon}</DockApp>
      ))}
      <DockApp aria-label="Excel" $running $current><ExcelLogo size={30} /></DockApp>
    </Dock>
    <Tray>
      <TrayButton aria-label="Hidden icons"><Ico w={12} h={8} color="#fff" sw={1.600}><path d="M1 7 6 1.500 11 7" /></Ico></TrayButton>
      <TrayButton aria-label="OneDrive"><CloudOffIcon /></TrayButton>
      <Stacked $align="center"><span>ENG</span><span>US</span></Stacked>
      <TrayGroup aria-label="Network, volume, battery"><WifiIcon /><VolumeIcon /><BatteryIcon /></TrayGroup>
      <TrayGroup>
        <Stacked $align="right"><span>9:12 PM</span><span>2024-10-28</span></Stacked>
        <BellIcon />
      </TrayGroup>
    </Tray>
  </TaskbarRow>
);

const App = () => (
  <>
    <GlobalStyle />
    <Window>
      <Toolbar />
      <Menu />
      <Ribbon />
      <FormulaBar />
      <Sheet />
      <SheetTabs />
      <Status />
      <Taskbar />
    </Window>
  </>
);

export default App;

/* ---------- styles ---------- */

const GlobalStyle = createGlobalStyle`
  * {
    box-sizing: border-box;
  }

  body {
    margin: 0;
    overflow: hidden;
    background: #0c0707;
    color: #fff;
    font-family: ${UI_FONT};
    font-size: 14px;
  }

  button,
  input,
  select {
    margin: 0;
    padding: 0;
    border: 0;
    background: none;
    color: inherit;
    font: inherit;
    outline: none;
  }

  svg {
    display: block;
    flex: none;
    overflow: visible;
  }
`;

const Window = styled.div`
  display: flex;
  flex-direction: column;
  height: 100vh;
  background: linear-gradient(90deg, #090707 0%, #0c0707 14%, #140707 32%, #140707 56%, #0d0707 80%, #090808 100%);
`;

const TitleBar = styled.header`
  display: grid;
  grid-template-columns: 1fr 460px 1fr;
  align-items: center;
  height: 60px;
  padding-left: 20px;
`;

const QuickAccess = styled.div`
  display: flex;
  align-items: center;
  gap: 15px;
`;

const SwitchLabel = styled.label`
  display: flex;
  align-items: center;
  gap: 10px;
  margin-left: 5px;
  font-size: 12px;
`;

const Switch = styled.span`
  display: flex;
  align-items: center;
  gap: 6px;
  width: 54px;
  height: 25px;
  padding-left: 4px;
  border: 1px solid #fff;
  border-radius: 13px;
  background: #262424;

  input {
    appearance: none;
    width: 0;
  }

  i {
    width: 18px;
    height: 18px;
    margin-left: -6px;
    border-radius: 50%;
    background: #fff;
  }
`;

const BarButton = styled.button`
  display: flex;
  align-items: center;
  gap: 8px;
`;

const FileName = styled.button`
  display: flex;
  align-items: center;
  gap: 4px;
  margin-left: 16px;
  font-size: 15px;
  white-space: nowrap;
`;

const SearchBox = styled.label`
  display: flex;
  align-items: center;
  gap: 14px;
  height: 40px;
  padding: 0 16px;
  border-radius: 4px;
  background: #1f1f1f;

  input {
    flex: 1;
    font-size: 16px;
  }

  input::placeholder {
    color: #a6a6a6;
    opacity: 1;
  }
`;

const WindowControls = styled.div`
  display: flex;
  align-items: center;
  justify-content: flex-end;
`;

const Account = styled.button`
  width: 30px;
  height: 30px;
  margin-right: 15px;
  border-radius: 50%;
  background: #750b1c;
  font-size: 12px;
`;

const WindowButton = styled.button`
  display: flex;
  align-items: center;
  justify-content: center;
  width: 60px;
  height: 40px;
`;

const MenuBar = styled.nav`
  display: flex;
  align-items: flex-start;
  height: 38px;
  padding: 4px 15px 0 27px;
`;

const Tabs = styled.div`
  display: flex;
  flex: 1;
  gap: 24px;
  padding-top: 4px;
`;

const Tab = styled.button`
  height: 27px;
  border-bottom: 3px solid ${({ $active }) => ($active ? '#5fbf86' : 'transparent')};
  font-size: 16px;
  font-weight: ${({ $active }) => ($active ? 600 : 400)};
  line-height: 24px;

  &:first-child {
    margin-right: 8px;
  }
`;

const CommentsButton = styled.button`
  display: flex;
  align-items: center;
  justify-content: center;
  gap: 5px;
  width: 117px;
  height: 30px;
  border: 1px solid #6b6b6b;
  border-radius: 5px;
  background: #292929;
  font-size: 16px;
`;

const ShareButton = styled(CommentsButton)`
  width: 89px;
  margin-left: 10px;
  border-color: #38a862;
  background: #38a862;
  color: #0a1f12;
`;

const RibbonBar = styled.section`
  display: flex;
  height: 124px;
  margin: 0 10px;
  border-radius: 10px;
  background: #292929;
`;

const GroupBox = styled.div`
  display: flex;
  flex-direction: column;
  flex: 0 0 ${({ $width }) => $width}px;
  padding: 3px 0;
`;

const GroupLine = styled.div`
  width: 1px;
  margin: 6px 0 7px;
  background: #5c5c5c;
`;

const GroupBody = styled.div`
  display: flex;
  flex: 1;
`;

const GroupFooter = styled.div`
  display: flex;
  align-items: center;
  height: 18px;
  font-size: 12px;
  line-height: 18px;

  span {
    flex: 1;
    text-align: center;
  }
`;

const Launcher = styled.button`
  display: flex;
  justify-content: flex-end;
  width: 18px;
  padding-right: 2px;
`;

const Spacer = styled.div`
  flex: 0 0 ${({ $w }) => $w}px;
`;

const BigButton = styled.button`
  display: flex;
  flex-direction: column;
  align-items: center;
  flex: 0 0 ${({ $width }) => $width}px;
  padding-top: 6px;
  color: ${({ disabled }) => (disabled ? '#5c5c5c' : '#fff')};
  white-space: nowrap;
`;

const BigIcon = styled.span`
  display: flex;
  align-items: center;
  justify-content: center;
  height: 42px;
  margin-bottom: ${({ $split }) => ($split ? 2 : 0)}px;
`;

const BigLine = styled.span`
  display: flex;
  align-items: center;
  gap: 4px;
  height: 20px;
  font-size: 14px;
  line-height: 20px;
`;

const SmallColumn = styled.div`
  display: flex;
  flex-direction: column;
  width: 49px;
`;

const SmallRow = styled.div`
  display: flex;
  align-items: center;
  gap: 2px;
  height: 32px;
`;

const ToolRows = styled.div`
  display: flex;
  flex-direction: column;
  gap: 10px;
  width: ${({ $width }) => ($width ? `${$width}px` : 'auto')};
  padding-top: 11px;
`;

const ToolRow = styled.div`
  display: flex;
  align-items: center;
  gap: 2px;
  height: 30px;
`;

const Tool = styled.button`
  display: flex;
  align-items: center;
  justify-content: center;
  gap: 12px;
  width: ${({ $wide }) => ($wide ? 49 : 30)}px;
  height: 30px;
  border-radius: 5px;
  color: ${LINE};
  font-size: 20px;
  line-height: 28px;

  ${({ $on }) =>
    $on &&
    css`
      border: 1px solid #8a8a8a;
      background: #383838;
    `}
`;

const BoldMark = styled.b`
  font-size: 17px;
`;

const ItalicMark = styled.i`
  font-family: 'Liberation Serif', serif;
  font-size: 19px;
`;

const UnderMark = styled.u`
  font-size: 16px;
  text-underline-offset: 3px;
`;

const DropButton = styled.button`
  display: flex;
  justify-content: center;
  width: 12px;
  margin-right: 5px;
`;

const ToolLine = styled.div`
  width: 1px;
  height: 30px;
  background: #5c5c5c;
`;

const TallLine = styled.div`
  width: 1px;
  height: 78px;
  margin: 10px 12px 0 0;
  background: #5c5c5c;
`;

const TextTool = styled.button`
  display: flex;
  align-items: center;
  gap: 4px;
  margin-right: 14px;
  font-size: 14px;
`;

const ComboBox = styled.span`
  display: grid;
  align-items: center;
  width: ${({ $width }) => $width}px;
  height: 30px;
  border: 1px solid #6b6b6b;
  border-radius: 5px;

  select,
  svg {
    grid-area: 1 / 1;
  }

  select {
    width: 100%;
    height: 28px;
    padding-left: 2px;
    appearance: none;
    font-size: 14px;
  }

  svg {
    justify-self: end;
    margin-right: 3px;
    pointer-events: none;
  }
`;

const Collapse = styled.button`
  display: flex;
  align-items: flex-end;
  justify-content: flex-end;
  flex: 1;
  padding: 0 16px 8px 0;
`;

const FormulaRow = styled.div`
  display: flex;
  align-items: center;
  height: 30px;
  margin: 10px 10px 8px;
`;

const NameBox = styled.div`
  display: flex;
  align-items: center;
  width: 127px;
  height: 30px;
  padding: 0 6px;
  border: 1px solid #5c5c5c;
  border-radius: 5px;
  background: #292929;
  font-size: 15px;

  input {
    flex: 1;
    min-width: 0;
  }
`;

const FormulaInput = styled(NameBox)`
  flex: 1;
  margin-left: 5px;
  padding-left: 12px;
  padding-right: 4px;
`;

const Dots = styled.div`
  width: 3px;
  height: 15px;
  margin: 0 11px;
  background: repeating-linear-gradient(#d0d0d0 0 3px, transparent 3px 6px);
`;

const FxBox = styled.div`
  display: flex;
  align-items: center;
  justify-content: space-between;
  width: 107px;
  height: 30px;
  padding: 0 2px 0 6px;
  border: 1px solid #5c5c5c;
  border-radius: 5px;
  background: #292929;

  button {
    display: flex;
    align-items: center;
    gap: 5px;
  }
`;

const FxMark = styled.i`
  color: #d8d8d8;
  font-family: 'Liberation Serif', serif;
  font-size: 22px;
  line-height: 26px;
`;

const SheetArea = styled.main`
  display: flex;
  flex: 1;
  min-height: 0;
`;

const SheetView = styled.div`
  flex: 1;
  overflow: hidden;
  background: #fff;
`;

const Grid = styled.table`
  width: 100%;
  border-collapse: separate;
  border-spacing: 0;
  table-layout: fixed;
  font-family: ${CELL_FONT};
  font-size: 16px;
  line-height: 20px;
`;

const Col = styled.col`
  width: ${({ $width }) => ($width ? `${$width}px` : 'auto')};
`;

const ColHead = styled.th`
  height: 22px;
  padding: 1px 0 0;
  border-right: 1px solid ${({ $on }) => ($on ? '#a0a0a0' : '#4a4a4a')};
  border-bottom: 1px solid #a0a0a0;
  background: ${({ $on }) => ($on ? '#686868' : '#0a0a0a')};
  color: #e0e0e0;
  font-weight: 400;

  &:last-child {
    border-right: 0;
  }
`;

const Corner = styled(ColHead)`
  border-color: #8a8a8a;

  svg {
    margin-left: auto;
    margin-right: 3px;
  }
`;

const RowHead = styled.th`
  height: ${({ $height }) => $height || 22}px;
  padding: 1px 0 0;
  border-right: 1px solid #8a8a8a;
  border-bottom: 1px solid #4a4a4a;
  background: ${({ $on }) => ($on ? '#686868' : '#0a0a0a')};
  color: #e0e0e0;
  font-weight: 400;
  vertical-align: bottom;
`;

const Cell = styled.td`
  position: relative;
  padding: 1px 3px 0;
  border-right: 1px solid ${({ $edge }) => $edge};
  border-bottom: 1px solid ${({ $bottom }) => $bottom};
  background: ${({ $filled }) => ($filled ? '#ccccff' : '#fff')};
  color: #000;
  font-weight: ${({ $bold }) => ($bold ? 700 : 400)};
  line-height: ${({ $heading }) => ($heading ? 21 : 20)}px;
  text-align: ${({ $align }) => $align || 'left'};
  text-decoration: ${({ $underline }) => ($underline ? 'underline' : 'none')};
  vertical-align: middle;
  white-space: pre;

  ${({ $align }) =>
    $align === 'center' &&
    css`
      padding: 1px 0 0;
    `}
`;

const Money = styled.span`
  display: flex;
  justify-content: space-between;
  padding: 0 ${({ $dash }) => ($dash ? 25 : 6)}px 0 6px;
`;

const Selection = styled.span`
  position: absolute;
  z-index: 1;
  top: -2px;
  left: -2px;
  width: 83px;
  height: 25px;
  border: 2px solid #1e7145;

  &::after {
    content: '';
    position: absolute;
    right: -3px;
    bottom: -3px;
    width: 5px;
    height: 5px;
    background: #1e7145;
    box-shadow: -1px -1px 0 #fff;
  }
`;

const VScroll = styled.div`
  display: flex;
  flex-direction: column;
  align-items: center;
  gap: 5px;
  width: 21px;
  margin: 0 2px;
  padding: 5px 0 2px;
  border-radius: 10px;
  background: #161414;
`;

const VThumb = styled.div`
  flex: 1;
  width: 11px;
  margin-bottom: 114px;
  border-radius: 6px;
  background: #9a9a9a;
`;

const SheetTabBar = styled.div`
  display: flex;
  align-items: center;
  height: 40px;
  padding: 0 23px 2px 15px;
  border-top: 1px solid #4a4a4a;
`;

const NavButton = styled.button`
  display: flex;
  justify-content: center;
  width: 41px;
`;

const ActiveSheet = styled.button`
  align-self: flex-start;
  width: 40px;
  height: 35px;
  margin: -1px 4px 0 44px;
  border-radius: 0 0 5px 5px;
  background: #fff;
  color: #222;
  font-size: 16px;
  line-height: 26px;

  span {
    display: inline-block;
    border-bottom: 2px solid #107c41;
  }
`;

const OtherSheet = styled.button`
  width: 56px;
  height: 24px;
  border: solid #5c5c5c;
  border-width: 0 1px;
  font-size: 16px;
`;

const AddSheet = styled.button`
  margin: 0 auto 0 52px;
`;

const HScroll = styled.div`
  display: flex;
  align-items: center;
  gap: 6px;
  flex: 0 1 720px;
  height: 21px;
  margin-left: 9px;
  padding: 0 6px;
  border-radius: 10px;
  background: #161414;
`;

const HThumb = styled.div`
  flex: 1;
  height: 11px;
  margin-right: 16px;
  border-radius: 6px;
  background: #9a9a9a;
`;

const StatusBar = styled.footer`
  display: flex;
  align-items: center;
  height: 27px;
  padding: 0 10px 0 14px;
  border-top: 1px solid #3b3737;
  background: #141414;
  font-size: 12px;
`;

const AccessButton = styled.button`
  display: flex;
  align-items: center;
  gap: 4px;
  margin: 0 auto 0 27px;
  font-weight: 700;
`;

const ViewButton = styled.button`
  display: flex;
  align-items: center;
  justify-content: center;
  width: 50px;
  height: 26px;
  background: ${({ $on }) => ($on ? '#262626' : 'none')};
`;

const ZoomButton = styled.button`
  margin: 0 6px;
`;

const ZoomSlider = styled.input`
  appearance: none;
  width: 125px;
  height: 16px;
  background: linear-gradient(#9a9a9a, #9a9a9a) center / 100% 1px no-repeat;

  &::-webkit-slider-thumb {
    appearance: none;
    width: 6px;
    height: 14px;
    background: #b8b8b8;
  }

  & + ${ZoomButton} {
    margin-right: 18px;
  }
`;

const TaskbarRow = styled.footer`
  display: grid;
  grid-template-columns: 1fr auto 1fr;
  align-items: center;
  height: 60px;
  border-top: 1px solid #4a4646;
  background: linear-gradient(
    90deg,
    #231c1c 0%,
    #25201e 12%,
    #2b1c1c 20%,
    #231f1e 27%,
    #361918 36%,
    #431514 42%,
    #311b1a 49%,
    #301a1a 55%,
    #481311 63%,
    #311b1a 71%,
    #251e1d 78%,
    #291d1c 90%,
    #231e1d 100%
  );
`;

const Weather = styled.button`
  display: flex;
  align-items: center;
  gap: 8px;
  padding: 0 0 2px 24px;
  font-size: 15px;
  line-height: 20px;
  text-align: left;

  small {
    display: block;
    color: #c4bfbf;
    font-size: 15px;
  }
`;

const Dock = styled.div`
  display: flex;
  align-items: center;
  gap: 5px;
  padding-right: 2px;
`;

const DockApp = styled.button`
  display: flex;
  align-items: center;
  justify-content: center;
  position: relative;
  width: 50px;
  height: 50px;
  border: 1px solid ${({ $current }) => ($current ? '#453a39' : 'transparent')};
  border-radius: 5px;
  background: ${({ $current }) => ($current ? '#3b302f' : 'none')};

  ${({ $running, $current }) =>
    $running &&
    css`
      &::after {
        content: '';
        position: absolute;
        bottom: 0;
        width: ${$current ? 20 : 8}px;
        height: 4px;
        border-radius: 2px;
        background: ${$current ? '#f2806a' : '#a39a9a'};
      }
    `}
`;

const DockSearch = styled.label`
  display: flex;
  align-items: center;
  gap: 12px;
  width: 274px;
  height: 40px;
  margin: 0 0 0 2px;
  padding: 0 11px 0 14px;
  border: 1px solid #5e4b4a;
  border-radius: 20px;
  background: #4a3735;

  input {
    flex: 1;
    min-width: 0;
    font-size: 16px;
  }

  input::placeholder {
    color: #cfc8c8;
    opacity: 1;
  }
`;

const Tray = styled.div`
  display: flex;
  align-items: center;
  justify-content: flex-end;
  gap: 20px;
  padding: 0 26px 2px 0;
`;

const TrayButton = styled.button`
  display: flex;
  justify-content: center;
  width: 22px;
`;

const TrayGroup = styled.button`
  display: flex;
  align-items: center;
  gap: 10px;
`;

const Stacked = styled.span`
  display: flex;
  flex-direction: column;
  font-size: 15px;
  line-height: 20px;
  text-align: ${({ $align }) => $align};
`;
